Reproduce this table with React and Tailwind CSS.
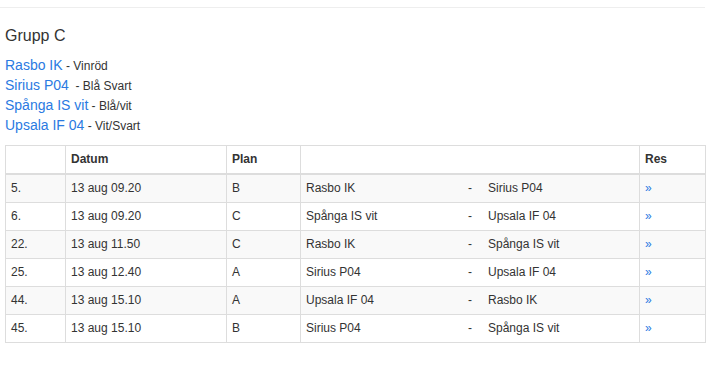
const teams = [
  { name: 'Rasbo IK', color: 'Vinröd' },
  { name: 'Sirius P04', color: 'Blå Svart', gap: true },
  { name: 'Spånga IS vit', color: 'Blå/vit' },
  { name: 'Upsala IF 04', color: 'Vit/Svart' },
]

const matches = [
  { nr: '5.', date: '13 aug 09.20', plan: 'B', home: 'Rasbo IK', away: 'Sirius P04' },
  { nr: '6.', date: '13 aug 09.20', plan: 'C', home: 'Spånga IS vit', away: 'Upsala IF 04' },
  { nr: '22.', date: '13 aug 11.50', plan: 'C', home: 'Rasbo IK', away: 'Spånga IS vit' },
  { nr: '25.', date: '13 aug 12.40', plan: 'A', home: 'Sirius P04', away: 'Upsala IF 04' },
  { nr: '44.', date: '13 aug 15.10', plan: 'A', home: 'Upsala IF 04', away: 'Rasbo IK' },
  { nr: '45.', date: '13 aug 15.10', plan: 'B', home: 'Sirius P04', away: 'Spånga IS vit' },
]

const cell = 'border border-[#ddd] px-[5px] py-[5px] leading-[17px] text-left align-top'

export default function App() {
  return (
    <div className="min-h-[374px] bg-white font-['Liberation_Sans',Arial,sans-serif] text-[#333]">
      <div className="w-[705px] pt-[7px]">
        <div className="h-px bg-[#eee]" />
        <div className="pl-[5px]">
          {/* Rubrik */}
          <h4 className="mt-[19px] text-[16px] leading-[18px] font-normal">Grupp C</h4>

          {/* Lag */}
          <div className="mt-[10px]">
            {teams.map((t) => (
              <div key={t.name} className="h-[20px] text-[14px] leading-[20px]">
                <a href="#" className="text-[#2a7ae2]">{t.name}</a>
                <span className="text-[12px] leading-[12px]">
                  {t.gap ? '\u00a0 - ' : ' - '}
                  {t.color}
                </span>
              </div>
            ))}
          </div>

          {/* Matcher */}
          <table className="mt-[10px] w-[700px] table-fixed border-collapse text-[12px]">
            <colgroup>
              <col className="w-[60px]" />
              <col className="w-[161px]" />
              <col className="w-[74px]" />
              <col className="w-[339px]" />
              <col className="w-[66px]" />
            </colgroup>
            <thead>
              <tr>
                <th className={`${cell} border-b-2 font-bold`}></th>
                <th className={`${cell} border-b-2 font-bold`}>Datum</th>
                <th className={`${cell} border-b-2 font-bold`}>Plan</th>
                <th className={`${cell} border-b-2 font-bold`}></th>
                <th className={`${cell} border-b-2 font-bold`}>Res</th>
              </tr>
            </thead>
            <tbody>
              {matches.map((m, i) => (
                <tr key={m.nr} className={i % 2 === 0 ? 'bg-[#f9f9f9]' : 'bg-white'}>
                  <td className={cell}>{m.nr}</td>
                  <td className={cell}>{m.date}</td>
                  <td className={cell}>{m.plan}</td>
                  <td className={cell}>
                    <div className="flex">
                      <span className="w-[162px] shrink-0">{m.home}</span>
                      <span className="w-[20px] shrink-0">-</span>
                      <span>{m.away}</span>
                    </div>
                  </td>
                  <td className={cell}>
                    <a href="#" className="text-[#2a7ae2]">»</a>
                  </td>
                </tr>
              ))}
            </tbody>
          </table>
        </div>
      </div>
    </div>
  )
}
